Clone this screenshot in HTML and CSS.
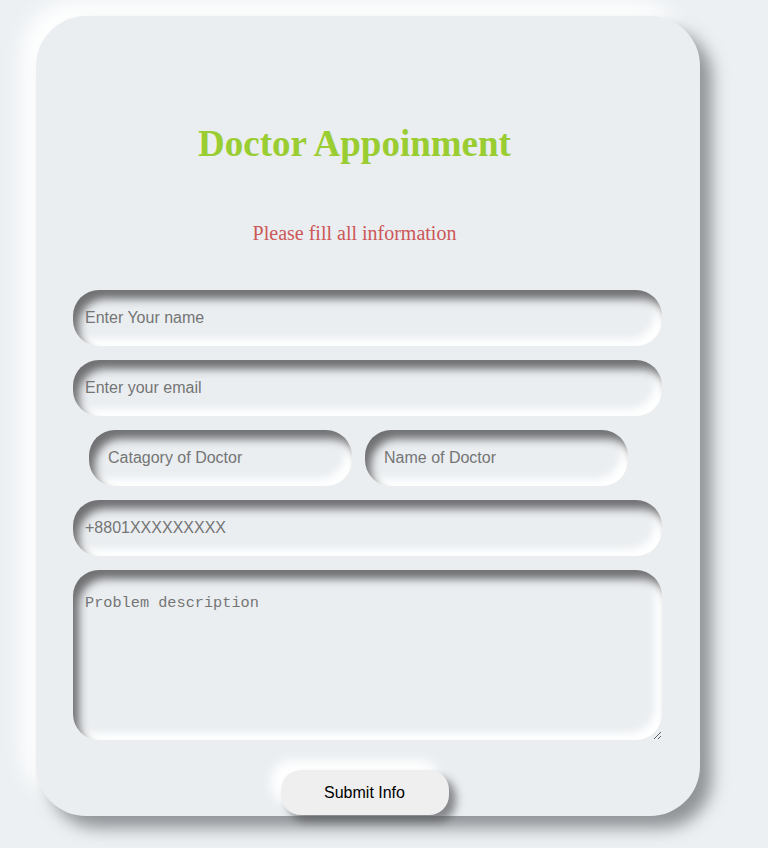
FILE: index.html
```html
<!DOCTYPE html>
<html lang="en">
<head>
<meta charset="utf-8">
<title>Doctor Appoinment</title>
<link rel="stylesheet" href="styles.css">
</head>
<body>
<main class="card">
  <h1 class="title">Doctor Appoinment</h1>
  <p class="subtitle">Please fill all information</p>
  <form class="form">
    <input class="field" type="text" placeholder="Enter Your name">
    <input class="field" type="email" placeholder="Enter your email">
    <div class="pair">
      <input class="field field-half field-cat" type="text" placeholder="Catagory of Doctor" autofocus>
      <input class="field field-half" type="text" placeholder="Name of Doctor">
    </div>
    <input class="field" type="tel" placeholder="+8801XXXXXXXXX">
    <textarea class="field area" placeholder="Problem description"></textarea>
    <div class="actions">
      <button class="submit" type="button">Submit Info</button>
    </div>
  </form>
</main>
</body>
</html>
```

FILE: styles.css
```css
html, body {
  margin: 0;
  padding: 0;
}

body {
  background: #ecf0f3;
  padding: 16px 0 0 36px;
  min-height: 848px;
  box-sizing: border-box;
}

.card {
  width: 664px;
  height: 800px;
  box-sizing: border-box;
  padding: 106px 38px 0 37px;
  background: #eaeef1;
  border-radius: 50px;
  box-shadow: 12px 12px 16px rgba(70, 72, 76, 0.55), -14px -14px 22px #ffffff;
}

.title {
  margin: 0;
  padding-right: 26px;
  text-align: center;
  font-family: "Liberation Serif", "Times New Roman", serif;
  font-weight: bold;
  font-size: 37px;
  line-height: 44px;
  color: #9acd32;
}

.subtitle {
  margin: 55px 0 0;
  padding-right: 26px;
  text-align: center;
  font-family: "Liberation Serif", "Times New Roman", serif;
  font-size: 20px;
  line-height: 24px;
  color: #cd5757;
}

.form {
  margin-top: 45px;
  display: flex;
  flex-direction: column;
  gap: 14px;
}

.field {
  display: block;
  box-sizing: border-box;
  width: 100%;
  height: 56px;
  border: none;
  outline: none;
  border-radius: 26px;
  background: #eaeef1;
  padding: 0 12px;
  font-family: "Liberation Sans", Arial, sans-serif;
  font-size: 16px;
  color: #333;
  box-shadow: inset 6px 9px 8px rgba(105, 105, 108, 0.95), inset -7px -7px 8px #ffffff;
}

.field::placeholder {
  color: #757575;
}

.pair {
  display: flex;
  gap: 13px;
  padding-left: 16px;
}

.field-half {
  width: 263px;
  padding-left: 19px;
}

.area {
  height: 170px;
  padding: 24px 12px 12px;
  font-family: "Liberation Mono", "Courier New", monospace;
  font-size: 15.25px;
  resize: vertical;
}

.actions {
  display: flex;
  justify-content: center;
  padding-right: 6px;
  margin-top: 16px;
}

.submit {
  width: 168px;
  height: 45px;
  border: none;
  border-radius: 20px;
  background: #efefef;
  font-family: "Liberation Sans", Arial, sans-serif;
  font-size: 16px;
  color: #000;
  box-shadow: 7px 7px 8px rgba(80, 80, 84, 0.65), -10px -10px 12px #ffffff;
  cursor: pointer;
}
```
